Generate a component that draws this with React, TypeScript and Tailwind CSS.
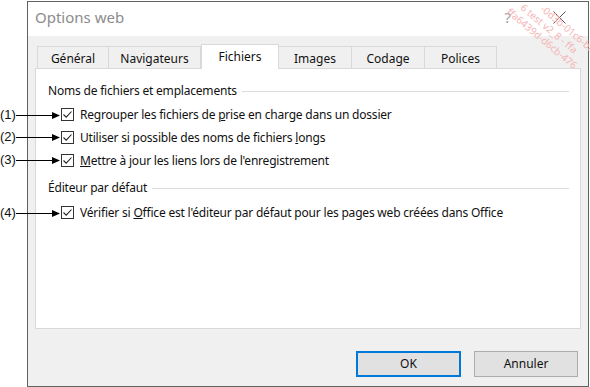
import React from 'react'

const font = { fontFamily: '"Noto Sans", "Open Sans", sans-serif' }

const tabs = ['Général', 'Navigateurs', 'Fichiers', 'Images', 'Codage', 'Polices']
const tabWidths = ['w-[72px]', 'w-[93px]', 'w-[78px]', 'w-[74px]', 'w-[74px]', 'w-[73px]']

function Check() {
  return (
    <span className="w-[13px] h-[13px] border border-[#333] bg-white flex items-center justify-center shrink-0">
      <svg width="11" height="11" viewBox="0 0 11 11">
        <path d="M1.5 5.5 L4.2 8.2 L9.5 2.5" fill="none" stroke="#222" strokeWidth="1.1" />
      </svg>
    </span>
  )
}

function Row({ children, className = '' }: { children: React.ReactNode; className?: string }) {
  return (
    <div className={`flex items-center gap-[6px] h-[23px] pl-[13px] ${className}`}>
      <Check />
      <span className="text-[12px] tracking-[-0.2px] text-[#111]">{children}</span>
    </div>
  )
}

function Header({ text }: { text: string }) {
  return (
    <div className="flex items-center gap-[5px] text-[12px] tracking-[-0.2px] text-[#111] h-[20px]">
      <span>{text}</span>
      <span className="flex-1 h-px bg-[#dcdcdc] mr-[11px]" />
    </div>
  )
}

export default function App() {
  const marks = [
    { n: '(1)', y: 115 },
    { n: '(2)', y: 137 },
    { n: '(3)', y: 160 },
    { n: '(4)', y: 213 },
  ]
  return (
    <div className="relative w-[590px] h-[387px] bg-white overflow-hidden" style={font}>
      <div className="ml-[27px] mt-[1px] w-[562px] h-[386px] border border-[#616161] bg-[#f0f0f0] flex flex-col">
        <div className="h-[34px] bg-white flex items-center pl-[7px] pr-[22px] shrink-0">
          <span className="text-[15px] text-[#8c8c8c] -mt-[3px]">Options web</span>
          <span className="ml-auto text-[15px] text-[#9a9a9a] -mt-[3px]">?</span>
          <svg className="ml-[42px] -mt-[3px]" width="13" height="13" viewBox="0 0 13 13">
            <path d="M0.5 0.5 L12.5 12.5 M12.5 0.5 L0.5 12.5" stroke="#555" strokeWidth="1" />
          </svg>
        </div>
        <div className="pt-[8px] px-[7px] flex flex-col">
          <div className="flex items-end pl-[2px] h-[24px]">
            {tabs.map((t, i) =>
              t === 'Fichiers' ? (
                <div
                  key={t}
                  className={`${tabWidths[i]} h-[25px] -mb-px bg-white border border-b-0 border-[#d9d9d9] flex items-center justify-center text-[12px] text-[#111] relative z-10`}
                >
                  {t}
                </div>
              ) : (
                <div
                  key={t}
                  className={`${tabWidths[i]} h-[22px] border border-[#d9d9d9] border-b-0 -ml-px first:ml-0 flex items-center justify-center text-[12px] text-[#111] pt-[3px]`}
                >
                  {t}
                </div>
              )
            )}
          </div>
          <div className="h-[261px] bg-white border border-[#d9d9d9] pl-[12px] pt-[12px]">
            <Header text="Noms de fichiers et emplacements" />
            <div className="mt-[2px]">
              <Row>
                Regrouper les fichiers de <u>p</u>rise en charge dans un dossier
              </Row>
              <Row>
                Utiliser si possible des noms de fichiers <u>l</u>ongs
              </Row>
              <Row>
                <u>M</u>ettre à jour les liens lors de l'enregistrement
              </Row>
            </div>
            <div className="mt-[6px]">
              <Header text="Éditeur par défaut" />
            </div>
            <Row className="mt-[3px]">
              Vérifier si <u>O</u>ffice est l'éditeur par défaut pour les pages web créées dans Office
            </Row>
          </div>
        </div>
        <div className="flex justify-end gap-[13px] pr-[10px] mt-[22px]">
          <button className="w-[105px] h-[26px] bg-[#e1e1e1] border-2 border-[#0078d7] text-[12px] text-[#111]">
            OK
          </button>
          <button className="w-[104px] h-[26px] bg-[#e1e1e1] border border-[#adadad] text-[12px] text-[#111]">
            Annuler
          </button>
        </div>
      </div>

      {marks.map(m => (
        <div key={m.n} className="absolute left-0 flex items-center" style={{ top: m.y - 9 }}>
          <span className="text-[13px] text-[#111] leading-[18px]" style={{ fontFamily: '"Liberation Sans", sans-serif' }}>
            {m.n}
          </span>
          <svg width="44" height="9" viewBox="0 0 44 9">
            <path d="M0 4.5 H38" stroke="#000" strokeWidth="1" />
            <path d="M36 1 L44 4.5 L36 8 Z" fill="#000" />
          </svg>
        </div>
      ))}

      <div className="absolute left-[524px] top-0 w-[70px] h-[80px] pointer-events-none text-[10px] leading-[12px] text-[#f5b5b5]">
        <div className="rotate-[40deg] origin-top-left translate-x-[10px] -translate-y-[8px] whitespace-nowrap">
          <div className="pl-[16px]">-0d3b-01c6-baa</div>
          <div>6 test v2_8 - ffa</div>
          <div className="-ml-[8px]">ffa6439d-d6cb-476</div>
        </div>
      </div>
    </div>
  )
}
